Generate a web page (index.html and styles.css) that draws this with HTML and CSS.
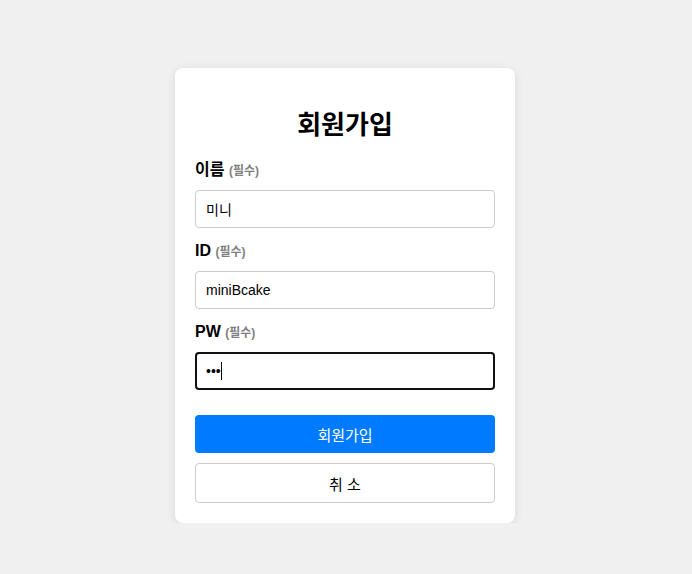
FILE: index.html
```html
<!DOCTYPE html>
<html lang="ko">
<head>
<meta charset="utf-8">
<title>회원가입</title>
<link rel="stylesheet" href="styles.css">
</head>
<body>
<main class="page">
  <section class="card">
    <h2 class="title">회원가입</h2>
    <form class="form">
      <div class="field">
        <label class="label">이름 <span class="req">(필수)</span></label>
        <input class="input" type="text" value="미니">
      </div>
      <div class="field">
        <label class="label">ID <span class="req">(필수)</span></label>
        <input class="input" type="text" value="miniBcake">
      </div>
      <div class="field">
        <label class="label">PW <span class="req">(필수)</span></label>
        <div class="input-wrap">
          <input class="input input-focused" type="password" value="abc">
          <span class="caret"></span>
        </div>
      </div>
      <div class="actions">
        <button class="btn btn-primary" type="button">회원가입</button>
        <button class="btn btn-secondary" type="button">취 소</button>
      </div>
    </form>
  </section>
</main>
</body>
</html>
```
FILE: styles.css
```css
html, body {
  margin: 0;
  padding: 0;
}
body {
  background: #f0f0f0;
  font-family: "Liberation Sans", "Noto Sans CJK KR", sans-serif;
  color: #000;
}
.page {
  display: flex;
  justify-content: center;
  padding-top: 68px;
  padding-right: 2px;
}
.card {
  width: 300px;
  padding: 20px;
  background: #fff;
  border-radius: 8px;
  box-shadow: 0 2px 10px rgba(0, 0, 0, 0.1);
}
.title {
  margin: 22px 0 20px;
  height: 30px;
  font-size: 26px;
  line-height: 30px;
  font-weight: 700;
  text-align: center;
}
.form {
  display: flex;
  flex-direction: column;
  gap: 13px;
  margin: 0;
}
.field {
  display: flex;
  flex-direction: column;
  gap: 10px;
}
.label {
  display: block;
  height: 20px;
  font-size: 16px;
  line-height: 20px;
  font-weight: 700;
}
.req {
  font-size: 12px;
  line-height: 12px;
  color: #808080;
  font-weight: 700;
}
.input-wrap {
  position: relative;
  display: flex;
}
.input {
  box-sizing: border-box;
  width: 100%;
  height: 38px;
  margin: 0;
  padding: 0 10px;
  border: 1px solid #ccc;
  border-radius: 4px;
  font-family: "Liberation Sans", "Noto Sans CJK KR", sans-serif;
  font-size: 14px;
  color: #000;
  background: #fff;
  outline: none;
}
.input-focused {
  border: 2px solid #111;
  padding: 0 9px;
}
.caret {
  position: absolute;
  left: 26px;
  top: 10px;
  width: 1px;
  height: 18px;
  background: #000;
}
.actions {
  display: flex;
  flex-direction: column;
  gap: 10px;
  margin-top: 12px;
}
.btn {
  box-sizing: border-box;
  width: 100%;
  margin: 0;
  border-radius: 4px;
  font-family: "Liberation Sans", "Noto Sans CJK KR", sans-serif;
  font-size: 15px;
  cursor: pointer;
}
.btn-primary {
  height: 38px;
  border: none;
  background: #007bff;
  color: #fff;
}
.btn-secondary {
  height: 40px;
  border: 1px solid #ccc;
  background: #fff;
  color: #000;
}
```
